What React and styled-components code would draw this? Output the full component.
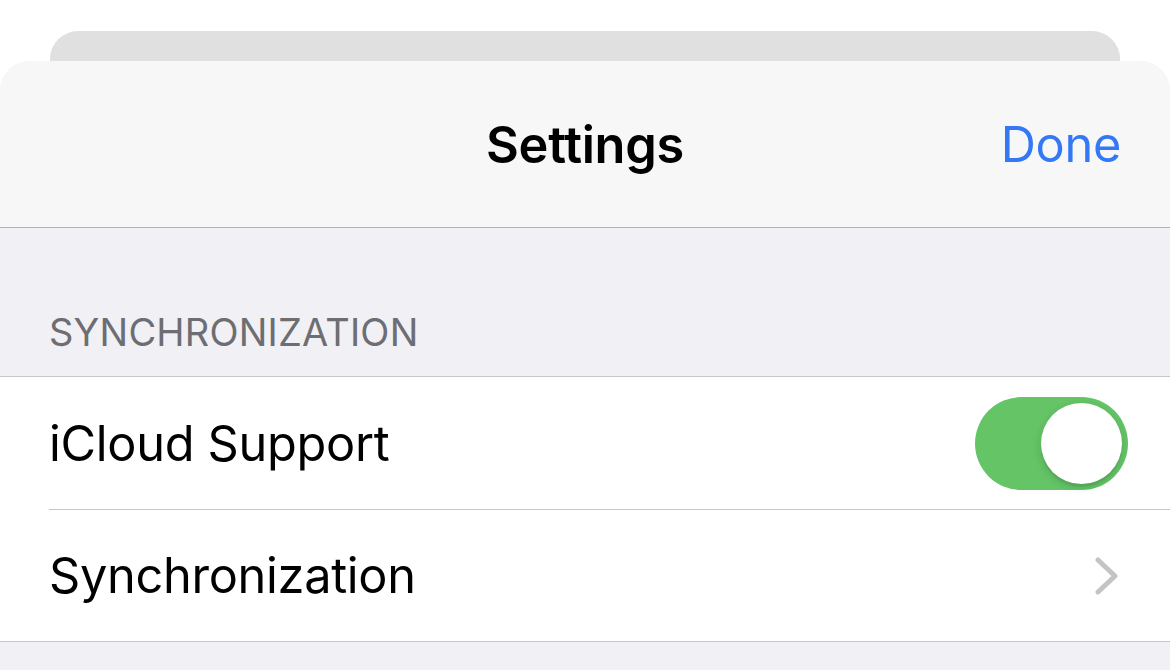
import React, { useState } from "react";
import styled, { createGlobalStyle } from "styled-components";

const Global = createGlobalStyle`
  html, body { margin: 0; padding: 0; background: #ffffff; }
  body { font-family: Inter, "Noto Sans", sans-serif; -webkit-font-smoothing: antialiased; }
`;

const Page = styled.div`
  width: 1170px;
  height: 670px;
  overflow: hidden;
  padding-top: 31px;
  box-sizing: border-box;
  background: #ffffff;
  display: flex;
  flex-direction: column;
`;

const BackCard = styled.div`
  margin: 0 50px;
  height: 30px;
  flex: none;
  background: #e0e0e0;
  border-radius: 28px 28px 0 0;
`;

const Sheet = styled.div`
  flex: 1;
  background: #f0f0f5;
  border-radius: 30px 30px 0 0;
  overflow: hidden;
  display: flex;
  flex-direction: column;
`;

const NavBar = styled.div`
  height: 166px;
  flex: none;
  background: #f7f7f7;
  border-bottom: 1px solid #b2b2b6;
  display: grid;
  grid-template-columns: 1fr auto 1fr;
  align-items: center;
  padding: 0 49px;
`;

const Title = styled.div`
  grid-column: 2;
  font-size: 50.5px;
  font-weight: 600;
  color: #000;
  letter-spacing: -0.3px;
`;

const DoneButton = styled.button`
  grid-column: 3;
  justify-self: end;
  background: none;
  border: 0;
  padding: 0;
  font-family: inherit;
  font-size: 48.7px;
  font-weight: 400;
  color: #3478f6;
  letter-spacing: -0.3px;
`;

const SectionHeader = styled.div`
  height: 148px;
  box-sizing: border-box;
  display: flex;
  align-items: flex-end;
  padding: 0 49px 21px;
  font-size: 38px;
  color: #6d6d72;
  letter-spacing: 0.2px;
`;

const Group = styled.div`
  background: #ffffff;
  border-top: 1px solid #c6c6c8;
  border-bottom: 1px solid #c6c6c8;
`;

const Row = styled.div`
  height: 132px;
  box-sizing: border-box;
  display: flex;
  align-items: center;
  margin-left: 49px;
  padding-right: ${(p) => p.$pr || 42}px;
  border-top: ${(p) => (p.$first ? "0" : "1px solid #c6c6c8")};
`;

const Label = styled.div`
  flex: 1;
  font-size: 48.7px;
  color: #000;
  letter-spacing: -0.3px;
`;

const Track = styled.button`
  width: 153px;
  height: 93px;
  border-radius: 47px;
  border: 0;
  padding: 0 6px;
  background: ${(p) => (p.$on ? "#64c466" : "#e9e9eb")};
  display: flex;
  align-items: center;
  justify-content: ${(p) => (p.$on ? "flex-end" : "flex-start")};
  cursor: pointer;
`;

const Knob = styled.span`
  width: 81px;
  height: 81px;
  border-radius: 50%;
  background: #ffffff;
  box-shadow: 0 3px 8px rgba(0, 0, 0, 0.15), 0 3px 1px rgba(0, 0, 0, 0.06);
`;

const Chevron = () => (
  <svg width="24" height="38" viewBox="0 0 24 38">
    <path d="M3 3 L20 19 L3 35" fill="none" stroke="#c4c4c7" strokeWidth="5" strokeLinecap="round" strokeLinejoin="round" />
  </svg>
);

export default function App() {
  const [on, setOn] = useState(true);
  return (
    <>
      <Global />
      <Page>
        <BackCard />
        <Sheet>
          <NavBar>
            <Title>Settings</Title>
            <DoneButton>Done</DoneButton>
          </NavBar>
          <SectionHeader>SYNCHRONIZATION</SectionHeader>
          <Group>
            <Row $first>
              <Label>iCloud Support</Label>
              <Track $on={on} onClick={() => setOn(!on)}>
                <Knob />
              </Track>
            </Row>
            <Row $pr={51}>
              <Label>Synchronization</Label>
              <Chevron />
            </Row>
          </Group>
        </Sheet>
      </Page>
    </>
  );
}
